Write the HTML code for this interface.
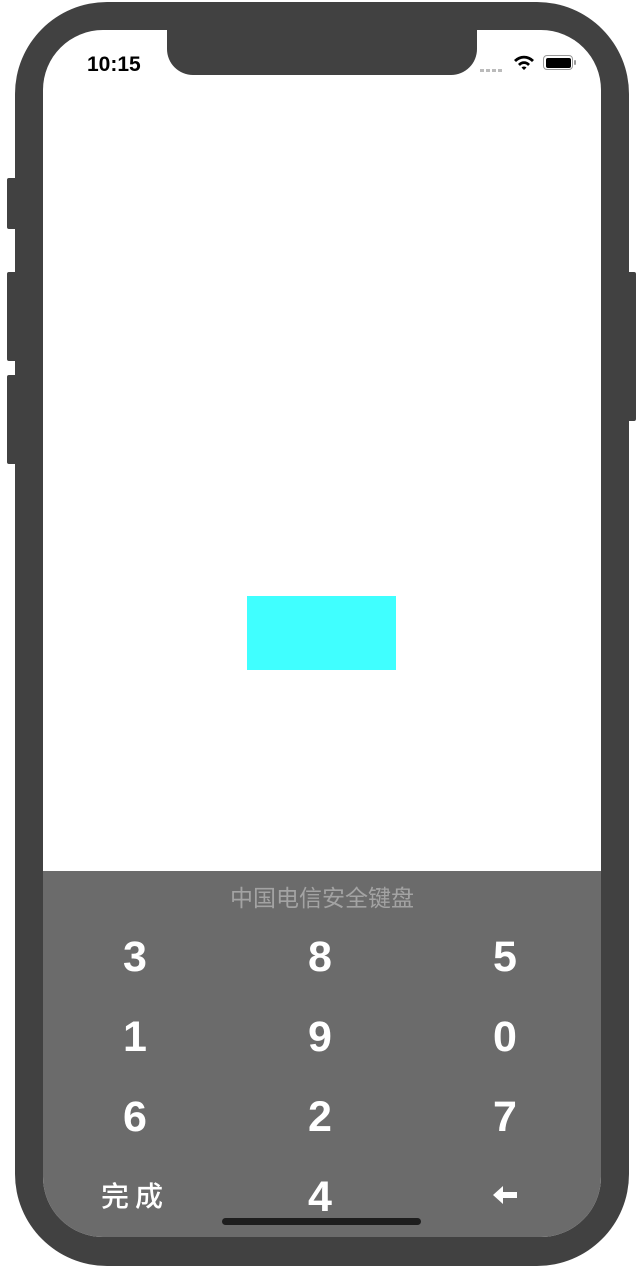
<!DOCTYPE html>
<html><head><meta charset="utf-8"><style>
body{margin:0;width:644px;height:1268px;background:#fff;position:relative;overflow:hidden;font-family:"Liberation Sans","Noto Sans CJK SC",sans-serif}
.a{position:absolute}
.frame{left:15px;top:2px;width:614px;height:1264px;background:#414141;border-radius:92px}
.btn{background:#414141;border-radius:2px}
.screen{left:43px;top:30px;width:558px;height:1207px;background:#fff;border-radius:60px;overflow:hidden}
.notch{left:124px;top:0;width:310px;height:45px;background:#414141;border-radius:0 0 26px 26px}
.kb{left:0;top:841px;width:558px;height:366px;background:#6b6b6b}
.k{position:absolute;width:120px;margin-left:-60px;text-align:center;color:#fff;font-size:43px;font-weight:bold;line-height:40px}
</style></head><body>
<div class="a btn" style="left:7px;top:178px;width:10px;height:51px"></div>
<div class="a btn" style="left:7px;top:272px;width:10px;height:89px"></div>
<div class="a btn" style="left:7px;top:375px;width:10px;height:89px"></div>
<div class="a btn" style="left:627px;top:272px;width:9px;height:149px"></div>
<div class="a frame"></div>
<div class="a screen">
 <div class="a notch"></div>
 <div class="a" style="left:44px;top:23px;font-size:21px;font-weight:bold;color:#000">10:15</div>
 <div class="a" style="left:437px;top:39px;width:24px;height:3px;background:repeating-linear-gradient(90deg,#bbb 0 4px,transparent 4px 6px)"></div>
 <svg class="a" style="left:469px;top:24px" width="24" height="18" viewBox="0 0 24 18"><path d="M2 6a14 14 0 0 1 20 0l-2 2a11 11 0 0 0-16 0z M6 10a8 8 0 0 1 12 0l-2 2a5 5 0 0 0-8 0z M9.5 13.5a3.5 3.5 0 0 1 5 0L12 16z" fill="#000"/></svg>
 <div class="a" style="left:500px;top:25px;width:30px;height:15px;border:1.5px solid #999;border-radius:4px;box-sizing:border-box;padding:1.5px"><div style="width:100%;height:100%;background:#000;border-radius:2px"></div></div>
 <div class="a" style="left:531px;top:30px;width:2px;height:5px;background:#999;border-radius:1px"></div>
 <div class="a" style="left:204px;top:566px;width:149px;height:74px;background:#40ffff"></div>
 <div class="a kb">
  <div class="a" style="left:0;width:558px;top:8px;text-align:center;color:#a3a3a3;font-size:23px">中国电信安全键盘</div>
  <div class="k" style="left:92px;top:66px">3</div><div class="k" style="left:277px;top:66px">8</div><div class="k" style="left:462px;top:66px">5</div>
  <div class="k" style="left:92px;top:146px">1</div><div class="k" style="left:277px;top:146px">9</div><div class="k" style="left:462px;top:146px">0</div>
  <div class="k" style="left:92px;top:226px">6</div><div class="k" style="left:277px;top:226px">2</div><div class="k" style="left:462px;top:226px">7</div>
  <div class="k" style="left:92px;top:306px;font-size:28px;font-weight:500;letter-spacing:6px">完成</div>
  <div class="k" style="left:277px;top:306px">4</div>
  <svg class="a" style="left:449px;top:313px" width="26" height="22" viewBox="0 0 26 22"><path d="M1 11L11 2v6h14v6H11v6z" fill="#fff"/></svg>
  <div class="a" style="left:179px;top:347px;width:199px;height:7px;background:#1e1e1e;border-radius:4px"></div>
 </div>
</div>
</body></html>
